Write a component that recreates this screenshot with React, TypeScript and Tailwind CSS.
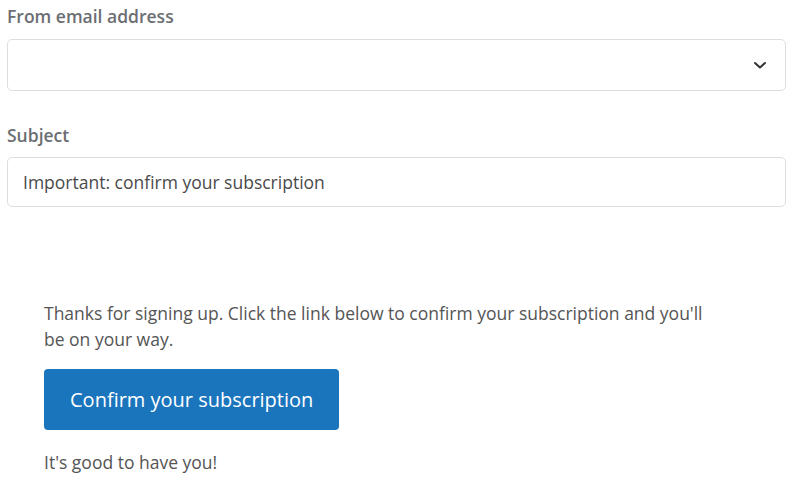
import { type FC } from "react";

const Chevron: FC = () => (
  <svg width="16" height="16" viewBox="0 0 16 16" fill="none">
    <path d="M3 6l5 4.5L13 6" stroke="#333" strokeWidth="2" strokeLinecap="round" strokeLinejoin="round" />
  </svg>
);

const App: FC = () => {
  return (
    <div className="min-h-screen bg-white font-['Open_Sans',sans-serif]">
      <div className="pl-[7px] pr-[8px] pt-[4px]">
        <label className="block text-[17.5px] leading-[24px] font-semibold text-[#6b6e72]">From email address</label>
        <div className="mt-[11px] h-[52px] rounded-[5px] border border-[#dedede] flex items-center justify-end pr-[17px]">
          <Chevron />
        </div>

        <label className="mt-[32px] block text-[17.5px] leading-[24px] font-semibold text-[#6b6e72]">Subject</label>
        <div className="mt-[10px] h-[50px] rounded-[5px] border border-[#dedede] flex items-center pl-[15px] text-[17.5px] text-[#4a4a4a]">
          Important: confirm your subscription
        </div>
      </div>

      <div className="pl-[44px] pt-[93px]">
        <p className="max-w-[680px] text-[17.5px] leading-[26px] text-[#555]">
          Thanks for signing up. Click the link below to confirm your subscription and you'll be on your way.
        </p>
        <button className="mt-[17px] h-[61px] px-[26px] rounded-[4px] bg-[#1a75bd] text-white text-[20px] leading-[28px]">
          Confirm your subscription
        </button>
        <p className="mt-[19px] text-[17.5px] leading-[26px] text-[#555]">It's good to have you!</p>
      </div>
    </div>
  );
};

export default App;
